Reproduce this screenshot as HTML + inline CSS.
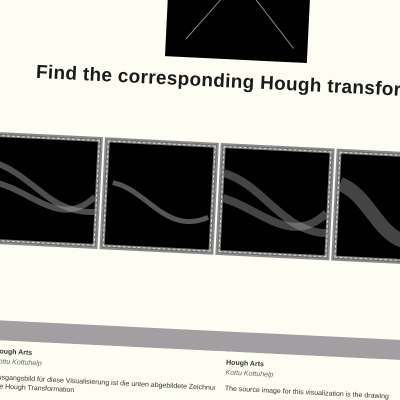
<!DOCTYPE html>
<html><head><meta charset="utf-8"><style>
html,body{margin:0;padding:0;width:400px;height:400px;overflow:hidden;background:#fdfdf4;}
#w{position:fixed;left:0;top:0;width:400px;height:400px;overflow:hidden;}
#r{position:absolute;left:0;top:0;width:400px;height:400px;transform:rotate(2.8deg);transform-origin:200px 200px;font-family:"Liberation Sans",sans-serif;}
.box{position:absolute;left:158px;top:-100px;width:142px;height:158px;background:#000;}
h1{position:absolute;left:30px;top:70px;margin:0;font-size:19px;font-weight:bold;color:#1a1a1a;white-space:nowrap;letter-spacing:0.3px;}
.t{position:absolute;top:144px;width:104px;height:102px;background:#000;border:3px solid #7a7a7a;outline:1px dashed #ddd;outline-offset:-2px;box-shadow:0 0 0 2px #8a8a8a;}
.t svg{width:100%;height:100%;display:block}
.band{position:absolute;left:-40px;top:330px;width:480px;height:20px;background:#a29ea2;}
.gap{position:absolute;left:208px;top:340px;width:16px;height:60px;background:#a29ea2;}
.card{position:absolute;top:350px;height:50px;overflow:hidden;background:#fdfdf4;font-size:7px;color:#333;}
.card b{display:block;font-size:7px;margin-top:8px}
.card i{display:block;color:#666;margin-top:3px}
.card p{margin:8px 0 0;line-height:9px}
</style></head><body><div id="w"><div id="r">
<div class="box"><svg width="142" height="158" style="position:absolute;left:0;top:0"><line x1="60" y1="90" x2="20" y2="140" stroke="#888" stroke-width="1"/><line x1="82" y1="90" x2="128" y2="144" stroke="#888" stroke-width="1"/></svg></div>
<h1>Find the corresponding Hough transform</h1>
<div class="t" style="left:-12px"><svg viewBox="0 0 104 102"><g fill="none" stroke="#aaa" stroke-opacity=".45" stroke-width="6"><path d="M0,25 C40,35 60,75 104,70"/><path d="M0,45 C40,50 70,90 104,55"/></g></svg></div>
<div class="t" style="left:104px"><svg viewBox="0 0 104 102"><g fill="none" stroke="#aaa" stroke-opacity=".5" stroke-width="5"><path d="M5,40 C40,45 60,90 102,70"/></g></svg></div>
<div class="t" style="left:220px"><svg viewBox="0 0 104 102"><g fill="none" stroke="#aaa" stroke-opacity=".4" stroke-width="8"><path d="M0,25 C40,35 60,80 104,80"/><path d="M0,50 C40,60 70,95 104,60"/></g></svg></div>
<div class="t" style="left:336px"><svg viewBox="0 0 104 102"><g fill="none" stroke="#888" stroke-opacity=".5" stroke-width="14"><path d="M0,30 C30,40 40,80 70,85"/></g></svg></div>
<div class="band"></div><div class="gap"></div>
<div class="card" style="left:-30px;width:238px;padding-left:32px"><b>Hough Arts</b><i>Kottu Kottuhelp</i><p>Ausgangsbild für diese Visualisierung ist die unten abgebildete Zeichnung<br>Die Hough Transformation</p></div>
<div class="card" style="left:224px;width:200px;padding-left:10px"><b>Hough Arts</b><i>Kottu Kottuhelp</i><p>The source image for this visualization is the drawing</p></div>
</div></div></body></html>
